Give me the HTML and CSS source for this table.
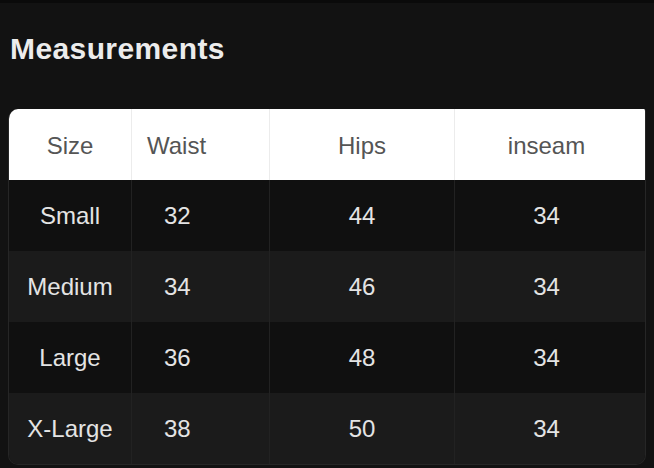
FILE: index.html
```html
<!DOCTYPE html>
<html lang="en">
<head>
<meta charset="utf-8">
<title>Measurements</title>
<link rel="stylesheet" href="styles.css">
</head>
<body>
<main class="page">
  <h2 class="title">Measurements</h2>
  <div class="table-wrap">
    <table class="sizes">
      <colgroup>
        <col class="w-size">
        <col class="w-waist">
        <col class="w-hips">
        <col class="w-inseam">
      </colgroup>
      <thead>
        <tr>
          <th class="c-size">Size</th>
          <th class="c-waist">Waist</th>
          <th class="c-hips">Hips</th>
          <th class="c-inseam">inseam</th>
        </tr>
      </thead>
      <tbody>
        <tr>
          <td class="c-size">Small</td>
          <td class="c-waist">32</td>
          <td class="c-hips">44</td>
          <td class="c-inseam">34</td>
        </tr>
        <tr>
          <td class="c-size">Medium</td>
          <td class="c-waist">34</td>
          <td class="c-hips">46</td>
          <td class="c-inseam">34</td>
        </tr>
        <tr>
          <td class="c-size">Large</td>
          <td class="c-waist">36</td>
          <td class="c-hips">48</td>
          <td class="c-inseam">34</td>
        </tr>
        <tr>
          <td class="c-size">X-Large</td>
          <td class="c-waist">38</td>
          <td class="c-hips">50</td>
          <td class="c-inseam">34</td>
        </tr>
      </tbody>
    </table>
  </div>
</main>
</body>
</html>
```
FILE: styles.css
```css
html, body {
  margin: 0;
  padding: 0;
  background: #121212;
}

body {
  font-family: "Liberation Sans", Arial, sans-serif;
  color: #e6e6e6;
  border-top: 3px solid #0a0a0a;
}

.page {
  width: 654px;
  height: 465px;
  overflow: hidden;
}

.title {
  margin: 0;
  padding: 31px 0 0 10px;
  font-size: 30px;
  line-height: 30px;
  font-weight: 700;
  color: #ececec;
  letter-spacing: 0.4px;
}

.table-wrap {
  margin: 45px 0 0 8px;
  width: 636px;
  border: 1px solid #262626;
  border-top: none;
  border-radius: 10px 2px 10px 10px;
  overflow: hidden;
}

.sizes {
  width: 100%;
  table-layout: fixed;
  border-collapse: separate;
  border-spacing: 0;
  font-size: 24px;
}

.w-size { width: 123px; }
.w-waist { width: 138px; }
.w-hips { width: 185px; }
.w-inseam { width: 190px; }

.sizes th {
  height: 71px;
  padding: 3px 0 0;
  box-sizing: border-box;
  background: #ffffff;
  color: #555555;
  font-weight: 400;
  border-right: 1px solid #ececec;
}

.sizes td {
  height: 71px;
  padding: 0;
  box-sizing: border-box;
  border-right: 1px solid #222222;
  color: #e4e4e4;
}

.sizes tr > :last-child {
  border-right: none;
}

.sizes tbody tr:nth-child(odd) td {
  background: #101010;
}

.sizes tbody tr:nth-child(even) td {
  background: #1b1b1b;
}

.c-size,
.c-hips,
.c-inseam {
  text-align: center;
}

.sizes .c-inseam {
  padding-right: 7px;
}

th.c-waist {
  text-align: left;
  padding-left: 15px;
}

td.c-waist {
  text-align: left;
  padding-left: 32px;
}
```
